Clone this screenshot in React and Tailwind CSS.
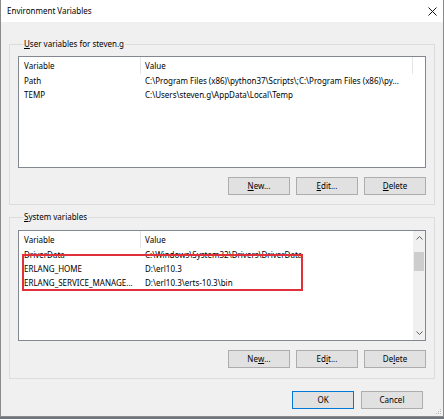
import React from 'react';

const Btn = ({ children, primary }) => (
  <button
    className={`w-[62px] h-[18px] flex items-center justify-center bg-[#e1e1e1] border ${primary ? 'border-[#0078d7]' : 'border-[#adadad]'} text-black leading-none`}
  >
    {children}
  </button>
);

const Row = ({ name, value }) => (
  <div className="flex h-[14px] items-center whitespace-nowrap">
    <div className="w-[122px] pl-[5px] overflow-hidden">{name}</div>
    <div className="flex-1 pl-[4px] overflow-hidden">{value}</div>
  </div>
);

const Header = ({ sep }) => (
  <div className="flex h-[17px] bg-white">
    <div className="w-[122px] pl-[5px] flex items-center border-r border-[#e5e5e5]">Variable</div>
    <div className={`pl-[4px] flex items-center ${sep ? 'w-[272px] border-r border-[#e5e5e5]' : 'flex-1'}`}>Value</div>
  </div>
);

const Chevron = ({ down }) => (
  <svg width="7" height="4" viewBox="0 0 7 4" className="text-[#606060]">
    <path d={down ? 'M0.5 0.5 L3.5 3.5 L6.5 0.5' : 'M0.5 3.5 L3.5 0.5 L6.5 3.5'} fill="none" stroke="currentColor" strokeWidth="1" />
  </svg>
);

export default function App() {
  return (
    <div className="w-[444px] h-[419px] bg-[#6f767d] font-['Noto_Sans',sans-serif] text-[8px] text-black">
      <div className="w-[444px] h-[417px] flex flex-col bg-[#f0f0f0] border-x border-b border-[#8a8a8a]">
        {/* title bar */}
        <div className="h-[22px] bg-white flex items-center justify-between pl-[6px] pr-[6px] shrink-0">
          <span>Environment Variables</span>
          <svg width="9" height="9" viewBox="0 0 9 9">
            <path d="M0.5 0.5 L8.5 8.5 M8.5 0.5 L0.5 8.5" stroke="#111" strokeWidth="1" />
          </svg>
        </div>

        <div className="flex-1 flex flex-col px-[8px] pt-[16px]">
          {/* user variables */}
          <fieldset className="border border-[#dcdcdc] px-[8px] pt-[6px] pb-[9px]">
            <legend className="ml-[5px] px-[1px] h-[12px] leading-[12px]">
              <span className="underline">U</span>ser variables for steven.g
            </legend>
            <div className="h-[112px] border border-[#828790] bg-white">
              <Header sep />
              <Row name="Path" value="C:\Program Files (x86)\python37\Scripts\;C:\Program Files (x86)\py..." />
              <Row name="TEMP" value="C:\Users\steven.g\AppData\Local\Temp" />
            </div>
            <div className="flex justify-end gap-[6px] mt-[9px]">
              <Btn><span className="underline">N</span>ew...</Btn>
              <Btn><span className="underline">E</span>dit...</Btn>
              <Btn><span className="underline">D</span>elete</Btn>
            </div>
          </fieldset>

          {/* system variables */}
          <fieldset className="border border-[#dcdcdc] px-[8px] pt-[7px] pb-[10px] mt-[6px]">
            <legend className="ml-[5px] px-[1px] h-[12px] leading-[12px]">
              <span className="underline">S</span>ystem variables
            </legend>
            <div className="h-[111px] border border-[#828790] bg-white flex">
              <div className="flex-1 relative">
                <Header />
                <Row name="DriverData" value="C:\Windows\System32\Drivers\DriverData" />
                <Row name="ERLANG_HOME" value="D:\erl10.3" />
                <Row name="ERLANG_SERVICE_MANAGE..." value="D:\erl10.3\erts-10.3\bin" />
                <div className="absolute left-[3px] top-[23px] w-[281px] h-[37px] border-2 border-[#e0303a]" />
              </div>
              <div className="w-[12px] bg-[#f0f0f0] flex flex-col items-center">
                <div className="h-[14px] flex items-center justify-center"><Chevron /></div>
                <div className="flex-1 w-full pt-[7px]">
                  <div className="h-[19px] w-[10px] mx-auto bg-[#cdcdcd]" />
                </div>
                <div className="h-[14px] flex items-center justify-center"><Chevron down /></div>
              </div>
            </div>
            <div className="flex justify-end gap-[6px] mt-[9px]">
              <Btn>Ne<span className="underline">w</span>...</Btn>
              <Btn>Ed<span className="underline">i</span>t...</Btn>
              <Btn>De<span className="underline">l</span>ete</Btn>
            </div>
          </fieldset>

          {/* dialog buttons */}
          <div className="flex justify-end gap-[7px] mt-[12px] pr-[12px]">
            <Btn primary>OK</Btn>
            <Btn>Cancel</Btn>
          </div>

          <div className="flex-1 flex justify-end items-end pb-[2px] -mr-[7px]">
            <svg width="6" height="6" viewBox="0 0 6 6">
              <rect x="4" y="0" width="1" height="1" fill="#bcbcbc" />
              <rect x="2" y="2" width="1" height="1" fill="#bcbcbc" />
              <rect x="4" y="2" width="1" height="1" fill="#bcbcbc" />
              <rect x="0" y="4" width="1" height="1" fill="#bcbcbc" />
              <rect x="2" y="4" width="1" height="1" fill="#bcbcbc" />
              <rect x="4" y="4" width="1" height="1" fill="#bcbcbc" />
            </svg>
          </div>
        </div>
      </div>
    </div>
  );
}
